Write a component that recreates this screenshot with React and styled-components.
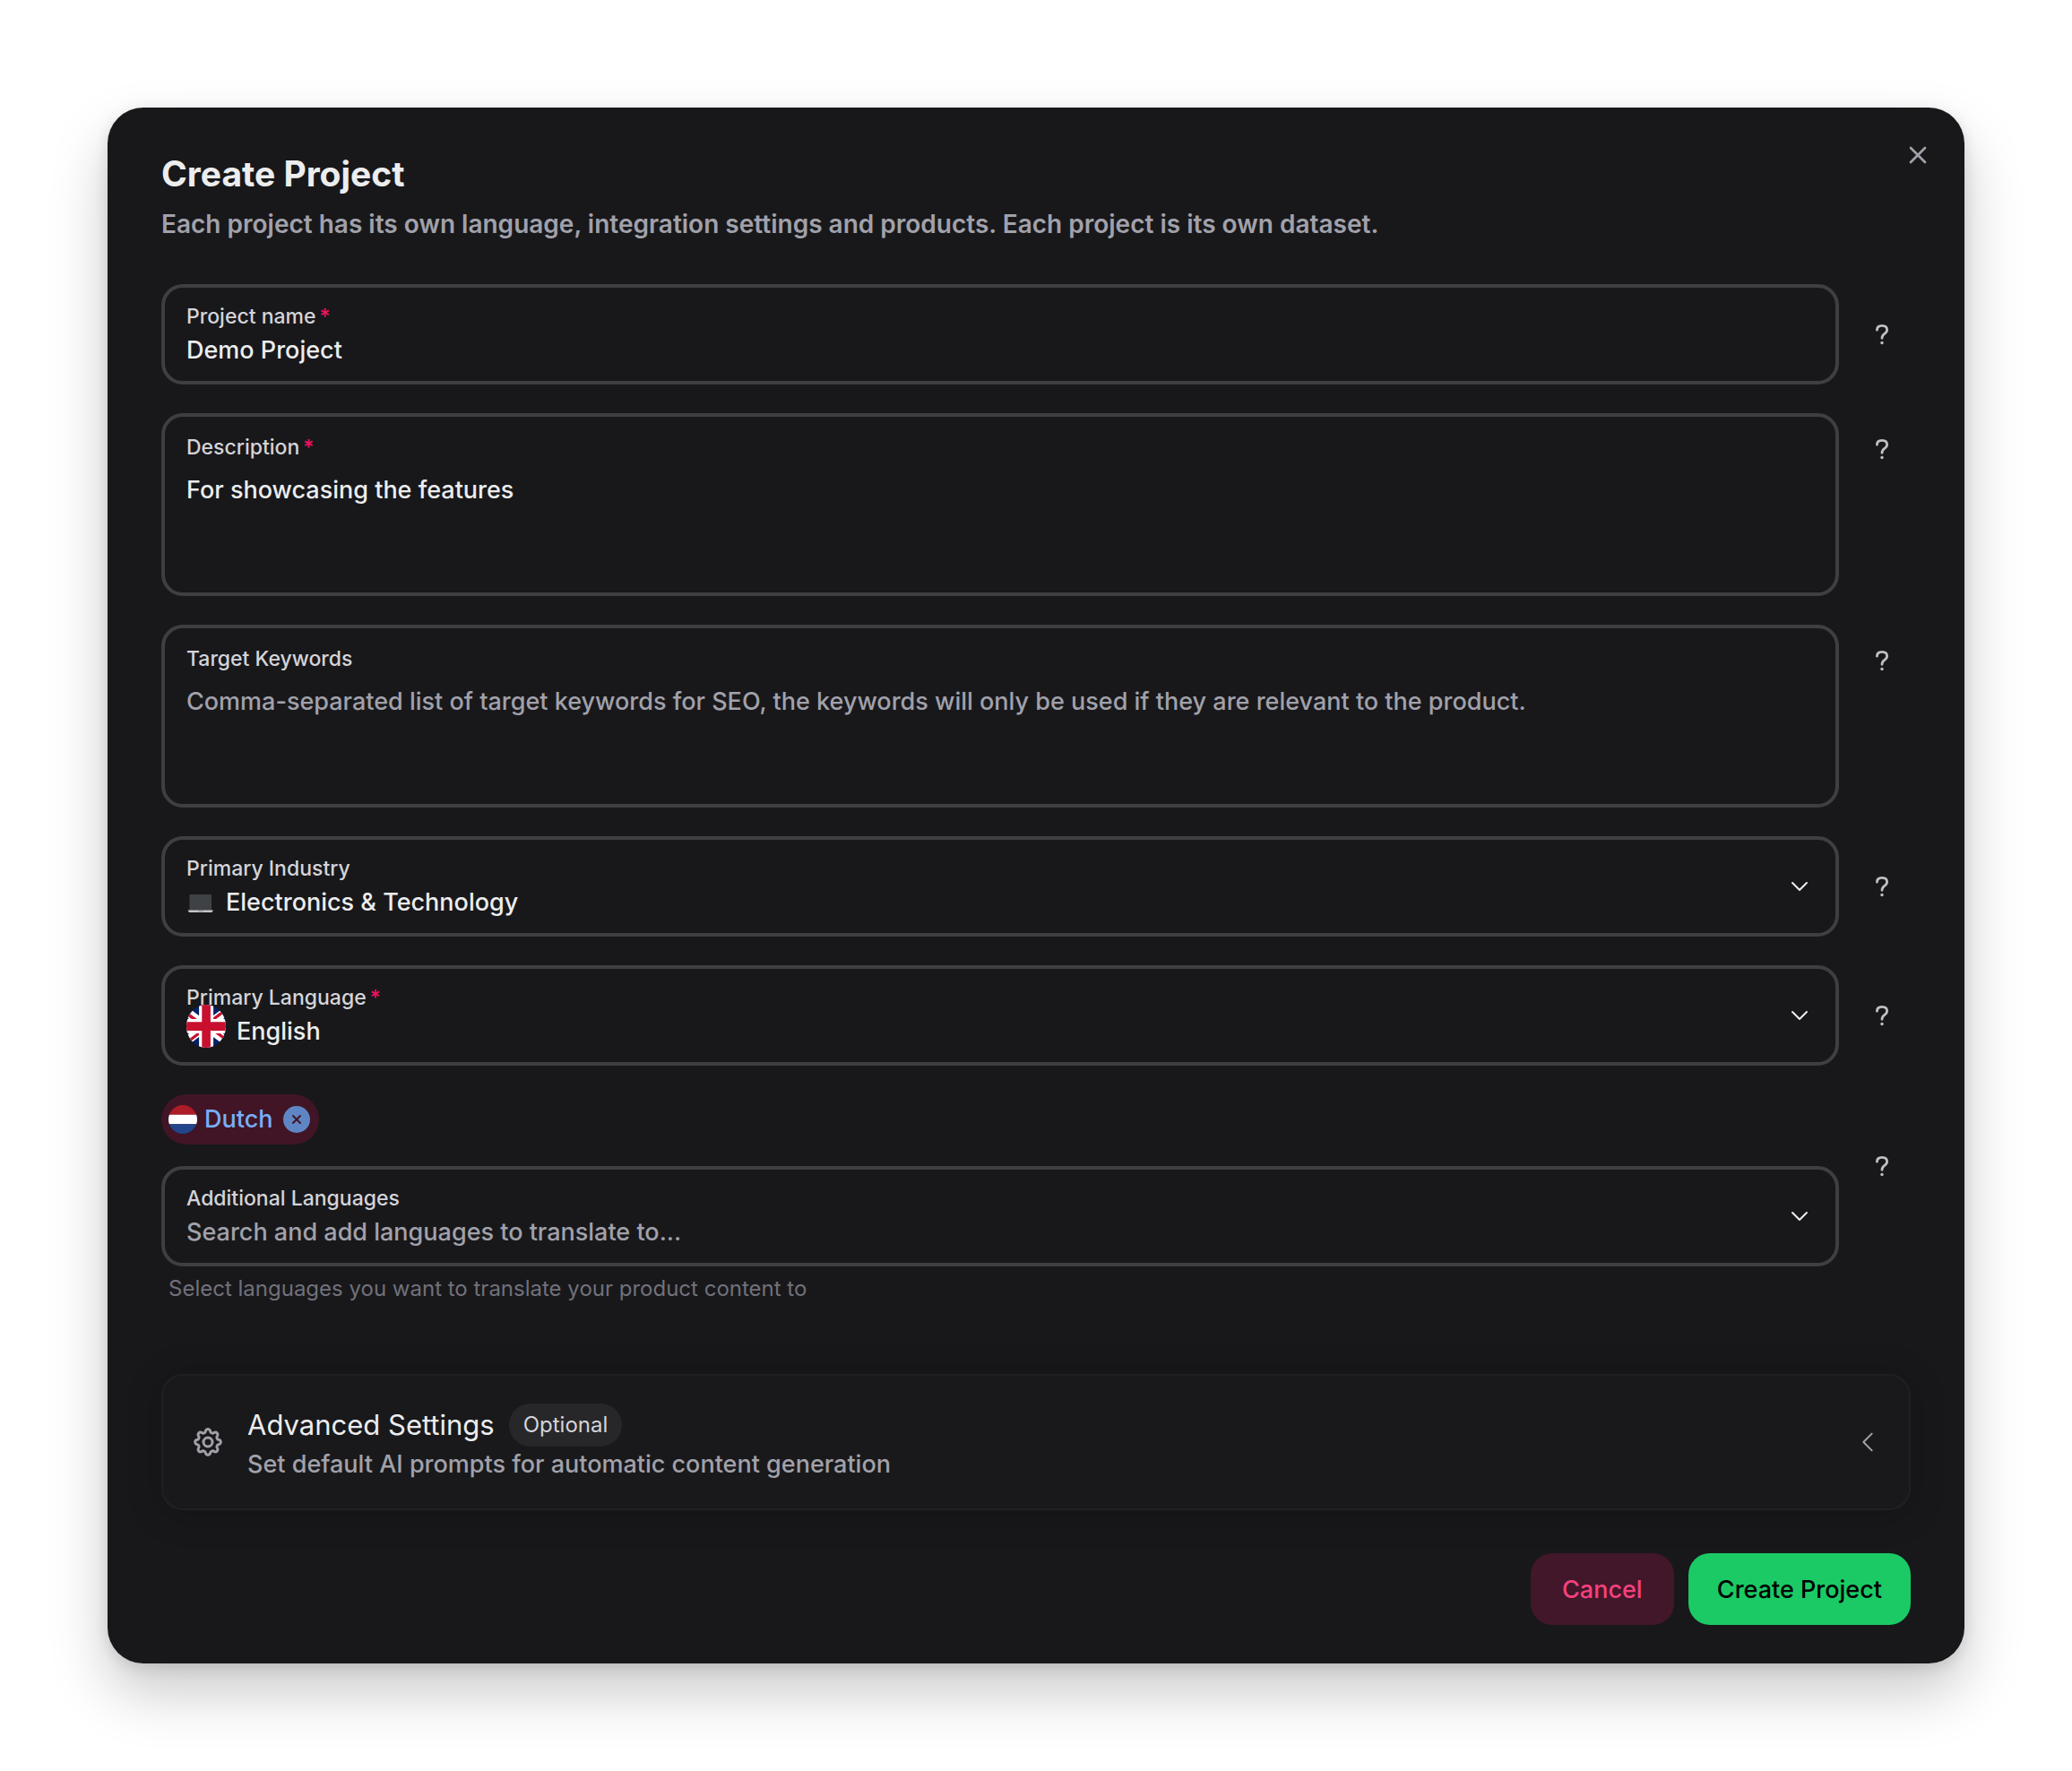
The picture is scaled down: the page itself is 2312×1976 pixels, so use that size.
import React, { useState } from "react";
import styled, { createGlobalStyle, css } from "styled-components";

const GlobalStyle = createGlobalStyle`
	*, *::before, *::after {
		box-sizing: border-box;
	}
	body {
		margin: 0;
		background: #ffffff;
		color: #ecedee;
		font-family: Inter, "Liberation Sans", sans-serif;
		font-size: 27px;
		font-weight: 450;
		line-height: 40px;
	}
	button, input, textarea, select {
		font: inherit;
		color: inherit;
	}
`;

const CloseIcon = ({ size = 32 }) => (
	<svg width={size} height={size} viewBox="0 0 24 24" fill="none" stroke="currentColor" strokeWidth="2" strokeLinecap="round" aria-hidden="true">
		<path d="M18 6L6 18M6 6l12 12" />
	</svg>
);

const SmallCloseIcon = () => (
	<svg width="16" height="16" viewBox="0 0 16 16" fill="none" stroke="currentColor" strokeWidth="2" strokeLinecap="round" aria-hidden="true">
		<path d="M4 4l8 8M12 4l-8 8" />
	</svg>
);

const ChevronIcon = ({ d }) => (
	<svg width="32" height="32" viewBox="0 0 24 24" fill="none" stroke="currentColor" strokeWidth="1.5" strokeLinecap="round" strokeLinejoin="round" aria-hidden="true">
		<path d={d} />
	</svg>
);

const DOWN = "m6 9 6 6 6-6";
const LEFT = "M15.5 19l-7-7 7-7";

const QuestionIcon = () => (
	<svg width="32" height="32" viewBox="0 0 32 32" fill="none" stroke="currentColor" strokeWidth="2.8" strokeLinecap="round" strokeLinejoin="round" aria-hidden="true">
		<path d="M10.400 11.200c0-3 2.200-4.800 5.600-4.800s5.600 1.800 5.600 4.600c0 2-1 3.100-2.800 4.300-2 1.300-2.800 2.400-2.800 5" />
		<circle cx="16" cy="25.500" r="1.700" fill="currentColor" stroke="none" />
	</svg>
);

// eight round teeth: arcs that bulge out and in by turns
const gearPath = Array.from({ length: 16 }, (_, i) => {
	const angle = ((i * 22.5 + 11.25) * Math.PI) / 180;
	const x = (20 + 12.9 * Math.cos(angle)).toFixed(2);
	const y = (20 + 12.9 * Math.sin(angle)).toFixed(2);
	return i === 0 ? `M${x} ${y}` : `A2.7 2.7 0 0 ${i % 2 ? 0 : 1} ${x} ${y}`;
}).join(" ") + " A2.7 2.7 0 0 1 32.65 22.52Z";

const GearIcon = () => (
	<svg width="40" height="40" viewBox="0 0 40 40" fill="none" stroke="currentColor" strokeWidth="3" strokeLinejoin="round" aria-hidden="true">
		<path d={gearPath} />
		<circle cx="20" cy="20" r="5" />
	</svg>
);

const LaptopIcon = () => (
	<svg width="32" height="24" viewBox="0 0 32 24" aria-hidden="true">
		<rect x="3.500" y="3" width="24.500" height="18" rx="1" fill="#3f4245" />
		<path d="M1.500 20.500h28.500l-1.500 2.500H3z" fill="#c4c4c6" />
		<path d="M13 20.500h6v1h-6z" fill="#77777a" />
	</svg>
);

const FlagUK = () => (
	<Flag width="44" height="48" viewBox="100 0 440 480" aria-hidden="true">
		<path fill="#012169" d="M0 0h640v480H0z" />
		<path fill="#fff" d="m75 0 244 181L562 0h78v62L400 241l240 178v61h-80L320 301 81 480H0v-60l239-178L0 64V0z" />
		<path fill="#c8102e" d="m424 281 216 159v40L369 281zm-184 20 6 35L54 480H0zM640 0v3L391 191l2-44L590 0zM0 0l239 176h-60L0 42z" />
		<path fill="#fff" d="M241 0v480h160V0zM0 160v160h640V160z" />
		<path fill="#c8102e" d="M0 193v96h640v-96zM273 0v480h96V0z" />
	</Flag>
);

const FlagNL = () => (
	<Flag width="32" height="32" viewBox="0 0 30 30" aria-hidden="true">
		<path fill="#ae1c28" d="M0 0h30v10H0z" />
		<path fill="#fff" d="M0 10h30v10H0z" />
		<path fill="#21468b" d="M0 20h30v10H0z" />
	</Flag>
);

const Field = ({ id, label, required, tall, select, start, children }) => (
	<Row $top={tall}>
		<FieldBox $tall={tall}>
			<Label htmlFor={id}>
				{label}
				{required && <Star>*</Star>}
			</Label>
			<ValueRow>
				{start}
				{children}
			</ValueRow>
			{select && (
				<Indicator>
					<ChevronIcon d={DOWN} />
				</Indicator>
			)}
		</FieldBox>
		<HelpButton type="button" aria-label={`Help: ${label}`} $drop={tall ? 8 : 0}>
			<QuestionIcon />
		</HelpButton>
	</Row>
);

export default function App() {
	const [name, setName] = useState("Demo Project");
	const [description, setDescription] = useState("For showcasing the features");
	const [dutch, setDutch] = useState(true);

	return (
		<Page>
			<GlobalStyle />
			<Modal role="dialog" aria-labelledby="modal-title">
				<CloseButton type="button" aria-label="Close">
					<CloseIcon />
				</CloseButton>
				<Header>
					<Title id="modal-title">Create Project</Title>
					<Subtitle>
						Each project has its own language, integration settings and products. Each project is its own dataset.
					</Subtitle>
				</Header>

				<Form onSubmit={(e) => e.preventDefault()}>
					<Field id="name" label="Project name" required>
						<Input id="name" value={name} onChange={(e) => setName(e.target.value)} />
					</Field>
					<Field id="description" label="Description" required tall>
						<TextArea id="description" value={description} onChange={(e) => setDescription(e.target.value)} />
					</Field>
					<Field id="keywords" label="Target Keywords" tall>
						<TextArea
							id="keywords"
							placeholder="Comma-separated list of target keywords for SEO, the keywords will only be used if they are relevant to the product."
						/>
					</Field>
					<Field id="industry" label="Primary Industry" select start={<LaptopIcon />}>
						<Select id="industry">
							<option>Electronics &amp; Technology</option>
						</Select>
					</Field>
					<Field
						id="language"
						label="Primary Language"
						required
						select
						start={
							<FlagSlot>
								<FlagUK />
							</FlagSlot>
						}
					>
						<Select id="language">
							<option>English</option>
						</Select>
					</Field>

					<Row $top>
						<Languages>
							{dutch && (
								<Chip>
									<FlagNL />
									Dutch
									<ChipClose type="button" aria-label="Remove Dutch" onClick={() => setDutch(false)}>
										<SmallCloseIcon />
									</ChipClose>
								</Chip>
							)}
							<FieldBox>
								<Label htmlFor="additional">Additional Languages</Label>
								<ValueRow>
									<Input
										id="additional"
										role="combobox"
										aria-expanded="false"
										aria-describedby="additional-hint"
										placeholder="Search and add languages to translate to..."
									/>
								</ValueRow>
								<Indicator>
									<ChevronIcon d={DOWN} />
								</Indicator>
							</FieldBox>
							<Hint id="additional-hint">Select languages you want to translate your product content to</Hint>
						</Languages>
						<HelpButton type="button" aria-label="Help: Additional Languages" $drop={48}>
							<QuestionIcon />
						</HelpButton>
					</Row>

					<Advanced type="button" aria-expanded="false">
						<GearIcon />
						<AdvancedText>
							<AdvancedTitle>
								Advanced Settings
								<Badge>Optional</Badge>
							</AdvancedTitle>
							<AdvancedSub>Set default AI prompts for automatic content generation</AdvancedSub>
						</AdvancedText>
						<ChevronIcon d={LEFT} />
					</Advanced>

					<Footer>
						<Button type="button" $danger>Cancel</Button>
						<Button type="submit">Create Project</Button>
					</Footer>
				</Form>
			</Modal>
		</Page>
	);
}

const Page = styled.main`
	padding: 120px;
`;

const Modal = styled.section`
	position: relative;
	padding: 48px 60px 43px;
	border-radius: 40px;
	background: #18181b;
	box-shadow: 0 32px 64px rgba(0, 0, 0, 0.21), 0 4px 16px rgba(0, 0, 0, 0.12);
`;

const CloseButton = styled.button`
	position: absolute;
	top: 17px;
	right: 16px;
	display: grid;
	place-items: center;
	width: 72px;
	height: 72px;
	padding: 0;
	border: 0;
	border-radius: 50%;
	background: none;
	color: #a1a1aa;
`;

const Header = styled.header`
	margin-bottom: 47px;
`;

const Title = styled.h1`
	margin: 0 0 10px;
	font-size: 39px;
	line-height: 52px;
	font-weight: 700;
`;

const Subtitle = styled.p`
	margin: 0;
	color: #a1a1aa;
	font-size: 28px;
	font-weight: 600;
`;

const Form = styled.form`
	display: flex;
	flex-direction: column;
	gap: 32px;
`;

const Row = styled.div`
	display: flex;
	align-items: ${({ $top }) => ($top ? "flex-start" : "center")};
	gap: 16px;
`;

const FieldBox = styled.div`
	position: relative;
	flex: 1;
	min-width: 0;
	padding: 14px 24px;
	border: 4px solid #3f3f42;
	border-radius: 24px;
	${({ $tall }) =>
		$tall &&
		css`
			padding: 16px 24px;

			textarea {
				margin-top: 10px;
			}
		`}
`;

const Label = styled.label`
	display: block;
	color: #d4d4d8;
	font-size: 23px;
	line-height: 36px;
`;

const Star = styled.span`
	margin-left: 4px;
	color: #f31260;
`;

const ValueRow = styled.div`
	display: flex;
	align-items: center;
	gap: 12px;
`;

const control = css`
	display: block;
	flex: 1;
	min-width: 0;
	padding: 0;
	border: 0;
	outline: none;
	background: none;

	&::placeholder {
		color: #a1a1aa;
		opacity: 1;
	}
`;

const Input = styled.input`
	${control}
	height: 40px;
`;

const TextArea = styled.textarea`
	${control}
	height: 118px;
	resize: none;
`;

const Select = styled.select`
	${control}
	height: 40px;
	appearance: none;

	option {
		background: #18181b;
	}
`;

const Indicator = styled.span`
	position: absolute;
	top: 50%;
	right: 24px;
	height: 32px;
	margin-top: -16px;
	pointer-events: none;

	svg {
		display: block;
	}
`;

const Flag = styled.svg`
	position: relative;
	flex: none;
	border-radius: 50%;
`;

/* shorter than the flag, which rises over the label */
const FlagSlot = styled.span`
	display: flex;
	align-items: flex-end;
	align-self: flex-start;
	height: 38px;
`;

const HelpButton = styled.button`
	display: grid;
	place-items: center;
	width: 64px;
	height: 64px;
	margin: ${({ $drop }) => $drop}px 0 0;
	padding: 0;
	border: 0;
	background: none;
	color: #c0c0c3;
`;

const Languages = styled.div`
	flex: 1;
	min-width: 0;
`;

const Chip = styled.div`
	display: flex;
	align-items: center;
	gap: 8px;
	width: max-content;
	height: 56px;
	margin-bottom: 24px;
	padding: 0 10px 0 8px;
	border-radius: 28px;
	background: #411525;
	color: #78aefa;
`;

const ChipClose = styled.button`
	display: grid;
	place-items: center;
	width: 30px;
	height: 30px;
	margin-left: 4px;
	padding: 0;
	border: 0;
	border-radius: 50%;
	background: #5f86c4;
	color: #411525;
`;

const Hint = styled.p`
	margin: 0;
	padding: 5px 8px 3px;
	color: #71717a;
	font-size: 24px;
	font-weight: 400;
`;

const Advanced = styled.button`
	display: flex;
	align-items: center;
	gap: 24px;
	height: 152px;
	margin-top: 40px;
	padding: 0 30px;
	border: 2px solid #202023;
	border-radius: 24px;
	background: #19191b;
	box-shadow: 0 4px 40px rgba(0, 0, 0, 0.2);
	color: #a1a1aa;
	text-align: left;
`;

const AdvancedText = styled.span`
	flex: 1;
	padding-top: 2px;
`;

const AdvancedTitle = styled.span`
	display: flex;
	align-items: center;
	gap: 16px;
	color: #ecedee;
	font-size: 31px;
	font-weight: 400;
	line-height: 48px;
`;

const AdvancedSub = styled.span`
	display: block;
`;

const Badge = styled.span`
	padding: 0 16px;
	border-radius: 24px;
	background: #27272a;
	color: #d4d4d8;
	font-size: 24px;
`;

const Footer = styled.footer`
	display: flex;
	justify-content: flex-end;
	gap: 16px;
	margin-top: 16px;
`;

const Button = styled.button`
	min-width: 160px;
	height: 80px;
	padding: 2px 32px 0;
	border: 0;
	border-radius: 24px;
	background: ${({ $danger }) => ($danger ? "#421729" : "#1bca65")};
	color: ${({ $danger }) => ($danger ? "#f54180" : "#000000")};
`;
